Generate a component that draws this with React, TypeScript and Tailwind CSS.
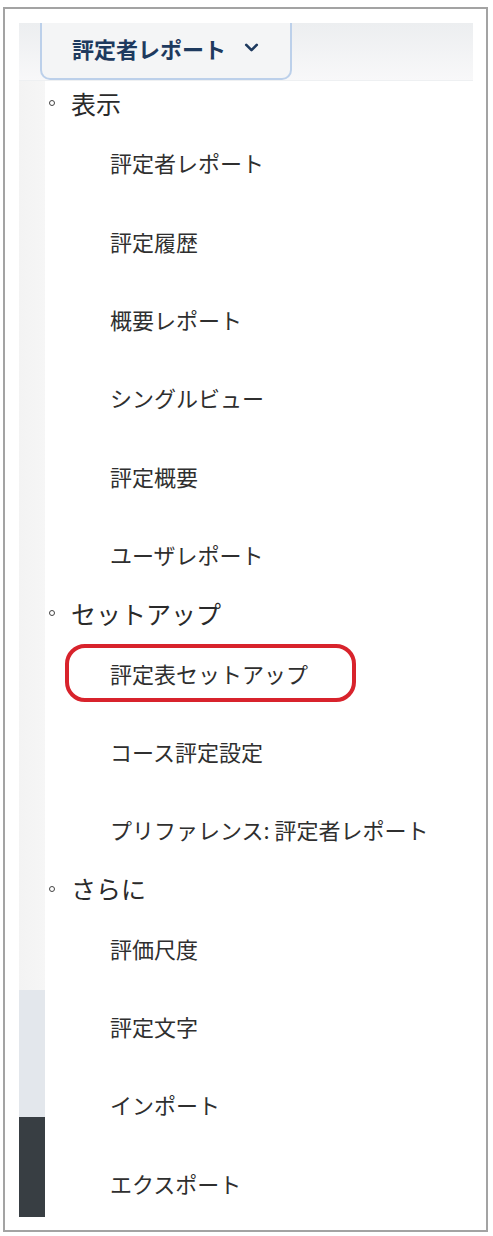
import React from "react";
import { ChevronDown } from "lucide-react";

type Row = { kind: "heading" | "item"; label: string; marked?: boolean };

const rows: Row[] = [
  { kind: "heading", label: "表示" },
  { kind: "item", label: "評定者レポート" },
  { kind: "item", label: "評定履歴" },
  { kind: "item", label: "概要レポート" },
  { kind: "item", label: "シングルビュー" },
  { kind: "item", label: "評定概要" },
  { kind: "item", label: "ユーザレポート" },
  { kind: "heading", label: "セットアップ" },
  { kind: "item", label: "評定表セットアップ", marked: true },
  { kind: "item", label: "コース評定設定" },
  { kind: "item", label: "プリファレンス: 評定者レポート" },
  { kind: "heading", label: "さらに" },
  { kind: "item", label: "評価尺度" },
  { kind: "item", label: "評定文字" },
  { kind: "item", label: "インポート" },
  { kind: "item", label: "エクスポート" },
];

const MenuRow: React.FC<{ row: Row }> = ({ row }) => {
  if (row.kind === "heading") {
    return (
      <li className="flex h-[40px] items-center">
        <span className="ml-[4px] h-[6px] w-[6px] rounded-full border-[1.5px] border-[#444]" />
        <span className="ml-[16px] text-[25px] leading-none text-[#2a2a2a]">{row.label}</span>
      </li>
    );
  }

  if (row.marked) {
    return (
      <li className="flex h-[78.4px] items-center">
        <span className="ml-[20px] flex h-[58px] items-center rounded-[20px] border-4 border-[#d8232c] pl-[41px] pr-[44px] text-[22px] leading-none text-[#2f2f2f]">
          {row.label}
        </span>
      </li>
    );
  }

  return (
    <li className="flex h-[78.4px] items-center pl-[65px] text-[22px] leading-none text-[#2f2f2f]">
      {row.label}
    </li>
  );
};

export default function App() {
  return (
    <div
      className="h-[1236px] w-[493px] bg-white pt-[7px] pl-[3px] pr-[5px] pb-[4px]"
      style={{ fontFamily: '"Noto Sans CJK JP", "Noto Sans", sans-serif' }}
    >
      <div className="flex h-full flex-col border-2 border-[#a3a3a3] pt-[14px] pl-[14px] pr-[13px] pb-[13px]">
        {/* top bar with dropdown */}
        <div className="flex h-[58px] shrink-0 bg-gradient-to-b from-[#eceef0] to-[#f8f8f9] border-b border-[#eef0f2]">
          <button className="ml-[21px] flex w-[252px] items-center rounded-b-[10px] border-x-2 border-b-2 border-[#bcd0ea] bg-[#f4f5f6] pb-[6px] pl-[30px] text-[22px] font-bold leading-none text-[#1e3a5f]">
            評定者レポート
            <ChevronDown className="ml-[15px] h-[21px] w-[21px]" strokeWidth={3} />
          </button>
        </div>

        <div className="flex flex-1">
          {/* left side strip */}
          <div className="flex w-[26px] shrink-0 flex-col">
            <div className="h-[909px] bg-gradient-to-r from-[#f3f3f3] to-[#f6f6f6]" />
            <div className="h-[127px] bg-[#e3e7ec]" />
            <div className="h-[100px] bg-[#383e43]" />
          </div>

          <ul className="flex-1 pt-[2px]">
            {rows.map((row) => (
              <MenuRow key={row.label} row={row} />
            ))}
          </ul>
        </div>
      </div>
    </div>
  );
}
